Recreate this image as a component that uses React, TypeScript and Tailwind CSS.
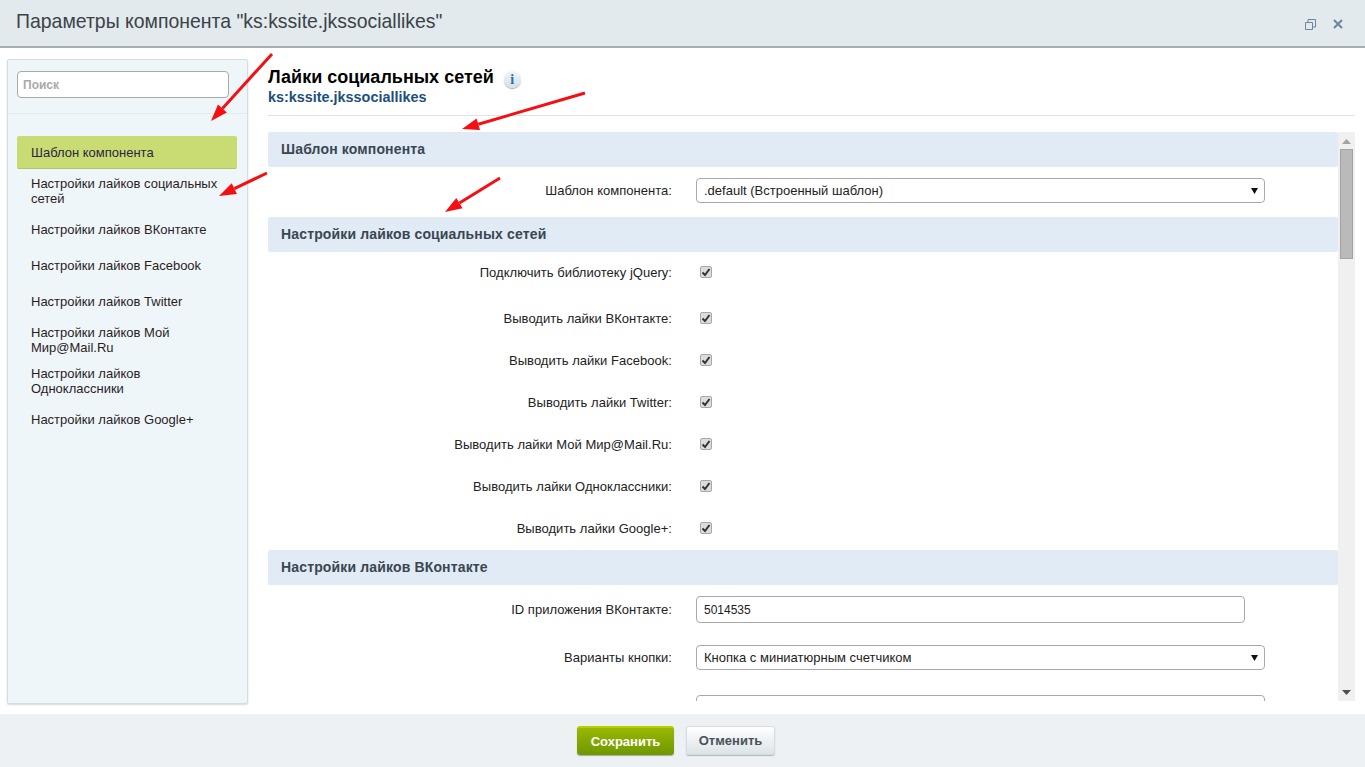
const menuItems = [
  { label: "Настройки лайков социальных сетей", height: "h-[37px]" },
  { label: "Настройки лайков ВКонтакте", height: "h-[40px]" },
  { label: "Настройки лайков Facebook", height: "h-[32px]" },
  { label: "Настройки лайков Twitter", height: "h-[40px]" },
  { label: "Настройки лайков Мой Мир@Mail.Ru", height: "h-[37px]" },
  { label: "Настройки лайков Одноклассники", height: "h-[45px]" },
  { label: "Настройки лайков Google+", height: "h-[32px]" },
];

const checkRows = [
  "Выводить лайки ВКонтакте:",
  "Выводить лайки Facebook:",
  "Выводить лайки Twitter:",
  "Выводить лайки Мой Мир@Mail.Ru:",
  "Выводить лайки Одноклассники:",
  "Выводить лайки Google+:",
];

const arrows = [
  { x1: 272, y1: 54, x2: 211, y2: 121 },
  { x1: 267, y1: 173, x2: 219, y2: 196 },
  { x1: 585, y1: 93, x2: 462, y2: 129 },
  { x1: 500, y1: 178, x2: 445, y2: 212 },
];

const Arrow = ({ x1, y1, x2, y2 }: { x1: number; y1: number; x2: number; y2: number }) => {
  const len = Math.hypot(x2 - x1, y2 - y1);
  const ux = (x2 - x1) / len;
  const uy = (y2 - y1) / len;
  const bx = x2 - ux * 17;
  const by = y2 - uy * 17;
  const head = `${x2},${y2} ${bx - uy * 6},${by + ux * 6} ${bx + uy * 6},${by - ux * 6}`;
  return (
    <g>
      <line x1={x1} y1={y1} x2={bx} y2={by} stroke="#f40f12" strokeWidth="3" />
      <polygon points={head} fill="#f40f12" />
    </g>
  );
};

const SectionTitle = ({ children }: { children: string }) => (
  <div className="flex h-[35px] items-center rounded-[2px] bg-[#e0ebf6] pl-[13px] text-[14px] font-bold tracking-[0.15px] text-[#3b4650]">
    {children}
  </div>
);

const Label = ({ children }: { children: string }) => (
  <span className="w-[404px] text-right text-[13px] tracking-[0.03px] text-[#222]">{children}</span>
);

const SelectBox = ({ value }: { value: string }) => (
  <div className="ml-[24px] flex h-[25px] w-[569px] items-center justify-between rounded-[4px] border border-[#a9a9a9] bg-white pl-[7px] pr-[6px] text-[13px] text-[#222]">
    <span>{value}</span>
    <svg width="7" height="6" viewBox="0 0 7 6">
      <path d="M0 0h7L3.5 6z" fill="#111" />
    </svg>
  </div>
);

const CheckRow = ({ label, className }: { label: string; className: string }) => (
  <div className={`flex items-center ${className}`}>
    <span className="flex translate-y-[1px]">
      <Label>{label}</Label>
    </span>
    <span className="ml-[28px] flex h-[12px] w-[12px] items-center justify-center rounded-[2px] border border-[#a8a8a8] bg-[#dcdcdc]">
      <svg width="10" height="9" viewBox="0 0 10 9">
        <path d="M1.500 4.500L4 7l4.500-6" fill="none" stroke="#333" strokeWidth="2" />
      </svg>
    </span>
  </div>
);

export default function App() {
  return (
    <div className="relative flex h-[767px] flex-col overflow-hidden bg-white font-['Liberation_Sans',Arial,sans-serif]">
      <header className="flex h-[48px] shrink-0 items-center justify-between border-b-2 border-[#a9aeb0] bg-[#e2eaed] pl-[16px] pr-[22px]">
        <h1 className="-translate-y-[1px] text-[19.45px] text-[#3c4347]">Параметры компонента "ks:kssite.jkssociallikes"</h1>
        <div className="flex translate-y-[1px] items-center gap-[17px]">
          <svg width="11" height="11" viewBox="0 0 11 11" fill="none" stroke="#6c84a0">
            <path d="M.5 3.500h7v7h-7z" />
            <path d="M3 3V.5h7.500V8H8" />
          </svg>
          <svg width="10" height="10" viewBox="0 0 10 10" fill="none" stroke="#6c84a0" strokeWidth="2">
            <path d="M1 1l8 8M9 1l-8 8" />
          </svg>
        </div>
      </header>

      <div className="flex min-h-0 flex-1">
        <aside className="ml-[7px] mt-[11px] h-[645px] w-[241px] shrink-0 rounded-[2px] border border-[#d5dde2] bg-[#eff6fa] shadow-[0_1px_2px_rgba(0,0,0,0.15)]">
          <div className="border-b border-[#e3ebf0] pb-[15px] pl-[9px] pt-[11px]">
            <input
              placeholder="Поиск"
              className="h-[27px] w-[212px] rounded-[4px] border border-[#a9a9a9] bg-white px-[5px] text-[12px] font-bold outline-none placeholder:text-[#a9a9a9]"
            />
          </div>
          <nav className="pl-[9px] pr-[10px] pt-[22px] text-[13px] leading-[15px] text-[#2b1d1d]">
            <div className="mb-[3px] flex h-[33px] items-center rounded-[2px] border-b border-[#b3c46a] bg-[#c8dc73] pl-[14px] text-[#2c2440]">
              Шаблон компонента
            </div>
            {menuItems.map((item) => (
              <div key={item.label} className={`flex items-center pl-[14px] pr-[14px] ${item.height}`}>
                {item.label}
              </div>
            ))}
          </nav>
        </aside>

        <main className="ml-[20px] w-[1087px]">
          <div className="h-[68px] border-b border-[#e2e2e2] pt-[19px]">
            <div className="flex items-center gap-[10px]">
              <h2 className="text-[18px] font-bold leading-[20px] text-black">Лайки социальных сетей</h2>
              <span className="flex h-[17px] w-[17px] translate-y-[2px] items-center justify-center rounded-full bg-gradient-to-b from-[#f2f6f8] to-[#d5dfe6] font-['Liberation_Serif',serif] text-[14px] font-bold text-[#2a6db0] shadow-[0_1px_1px_rgba(0,0,0,0.35)]">
                i
              </span>
            </div>
            <div className="mt-[2px] text-[14.4px] font-bold leading-[16px] text-[#1c4f7c]">ks:kssite.jkssociallikes</div>
          </div>

          <div className="mt-[16px] flex h-[569px]">
            <div className="w-[1070px] overflow-hidden">
              <SectionTitle>Шаблон компонента</SectionTitle>
              <div className="mb-[3px] flex items-center py-[11px]">
                <Label>Шаблон компонента:</Label>
                <SelectBox value=".default (Встроенный шаблон)" />
              </div>

              <SectionTitle>Настройки лайков социальных сетей</SectionTitle>
              <CheckRow label="Подключить библиотеку jQuery:" className="mb-[5px] h-[40px]" />
              {checkRows.map((label) => (
                <CheckRow key={label} label={label} className="h-[42px]" />
              ))}

              <div className="mt-[1px]">
                <SectionTitle>Настройки лайков ВКонтакте</SectionTitle>
              </div>
              <div className="mt-[11px] flex items-center">
                <Label>ID приложения ВКонтакте:</Label>
                <div className="ml-[24px] flex h-[27px] w-[549px] items-center rounded-[4px] border border-[#a9a9a9] bg-white pl-[7px] text-[12px] text-[#222]">
                  5014535
                </div>
              </div>
              <div className="mt-[22px] flex items-center">
                <Label>Варианты кнопки:</Label>
                <SelectBox value="Кнопка с миниатюрным счетчиком" />
              </div>
              <div className="ml-[428px] mt-[25px] h-[27px] w-[569px] rounded-[4px] border border-[#a9a9a9] bg-white" />
            </div>

            <div className="flex w-[17px] flex-col items-center bg-[#f0f0f0]">
              <svg className="mt-[7px]" width="9" height="5" viewBox="0 0 9 5">
                <path d="M4.500 0L9 5H0z" fill="#a3a3a3" />
              </svg>
              <div className="mt-[5px] h-[110px] w-[13px] border border-[#a3a3a3] bg-[#bababa]" />
              <svg className="mb-[6px] mt-auto" width="9" height="5" viewBox="0 0 9 5">
                <path d="M0 0h9L4.500 5z" fill="#505050" />
              </svg>
            </div>
          </div>
        </main>
      </div>

      <footer className="flex h-[53px] shrink-0 items-center justify-center gap-[12px] bg-[#edf1f4] pr-[13px]">
        <button className="h-[29px] w-[97px] rounded-[3px] border-t-2 border-[#b4d000] bg-gradient-to-b from-[#98b800] to-[#6f9700] text-[13px] font-bold text-white shadow-[0_1px_1px_rgba(0,0,0,0.3)]">
          Сохранить
        </button>
        <button className="h-[29px] w-[89px] rounded-[3px] border border-[#d5dde0] bg-gradient-to-b from-white to-[#dbe4e8] text-[13px] font-bold text-[#47525c] shadow-[0_1px_1px_rgba(0,0,0,0.25)]">
          Отменить
        </button>
      </footer>

      <svg className="pointer-events-none absolute left-0 top-0" width="1365" height="767">
        {arrows.map((a) => (
          <Arrow key={a.x1} {...a} />
        ))}
      </svg>
    </div>
  );
}
